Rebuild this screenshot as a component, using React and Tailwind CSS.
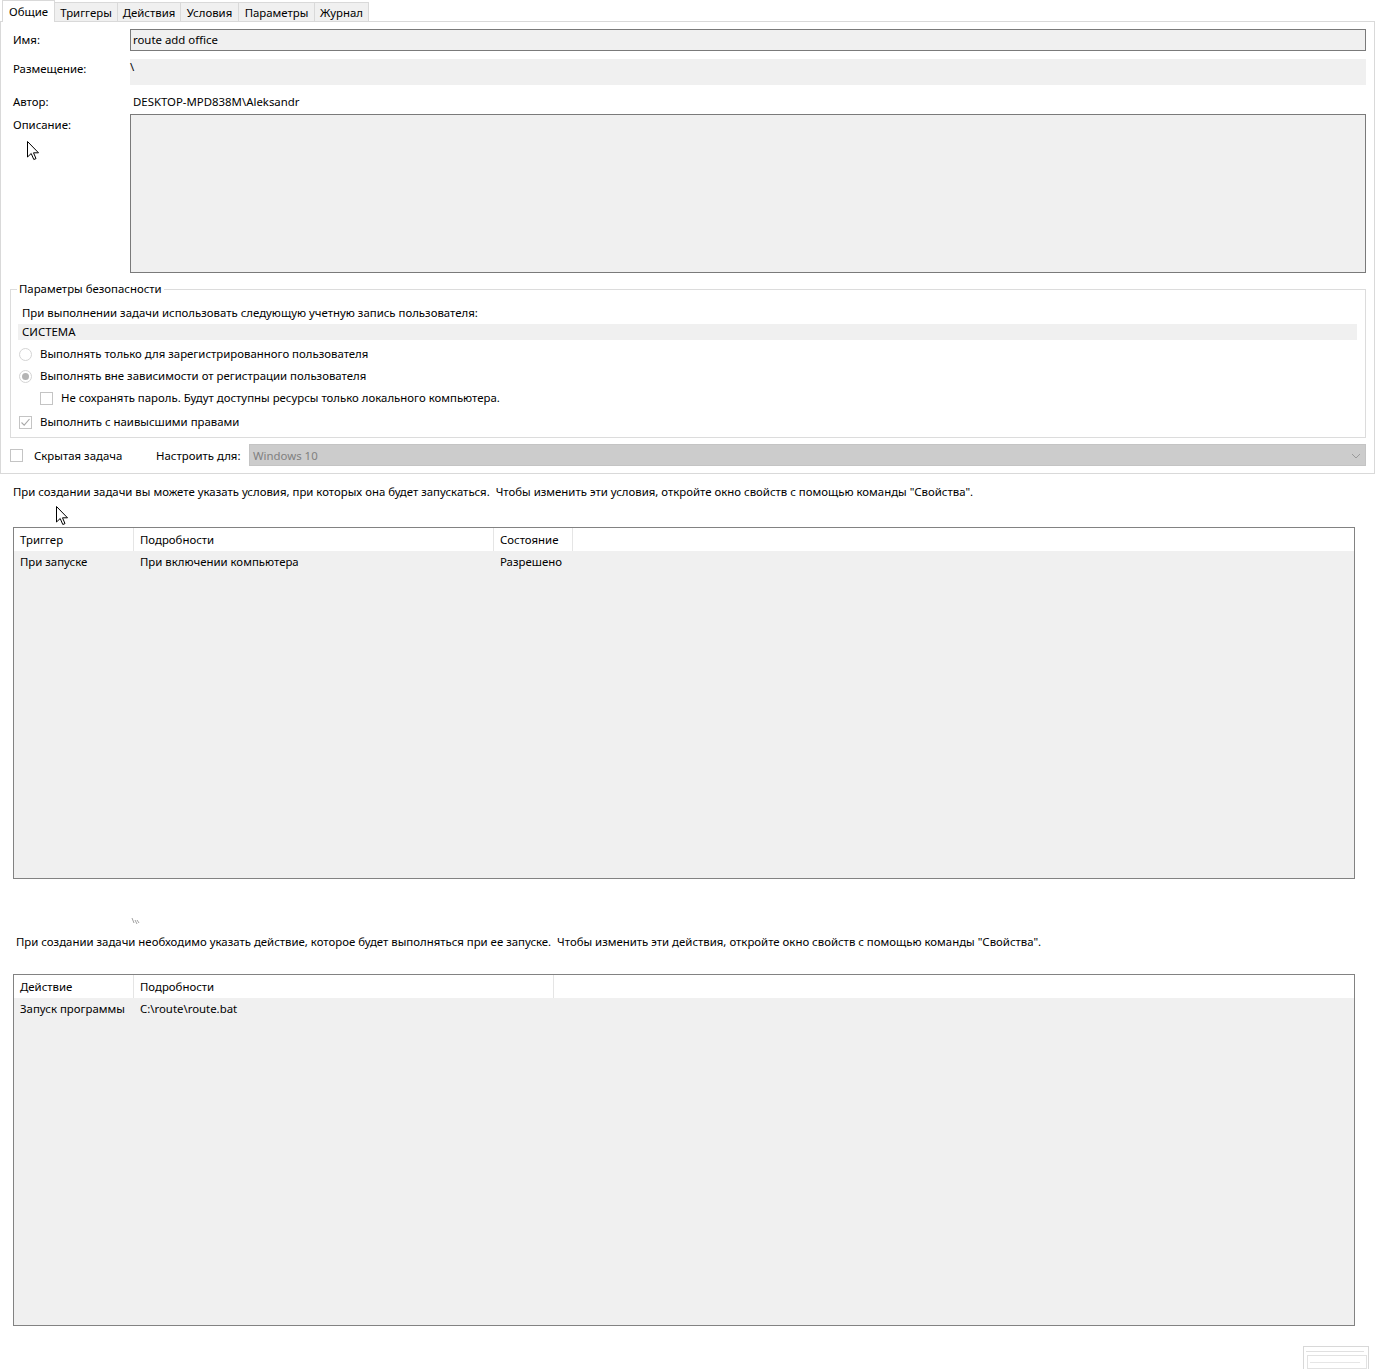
import React from 'react'

const Cursor = ({ className }) => (
    <svg className={className} width="13" height="20" viewBox="0 0 13 20">
        <path d="M0.5 0.5 L0.5 16 L4.2 12.5 L6.8 18.5 L9 17.6 L6.5 11.8 L11.5 11.8 Z" fill="#fff" stroke="#000" strokeWidth="1" strokeLinejoin="round" />
    </svg>
)

const Radio = ({ checked }) => (
    <span className="w-[13px] h-[13px] rounded-full border border-[#d4d4d4] bg-white flex items-center justify-center shrink-0">
        {checked && <span className="w-[7px] h-[7px] rounded-full bg-[#b4b4b4]" />}
    </span>
)

const Check = ({ checked }) => (
    <span className="w-[13px] h-[13px] border border-[#c4c4c4] bg-white flex items-center justify-center shrink-0">
        {checked && (
            <svg width="11" height="11" viewBox="0 0 11 11">
                <path d="M1.5 5.5 L4.2 8.2 L9.5 2" fill="none" stroke="#a8a8a8" strokeWidth="1.1" />
            </svg>
        )}
    </span>
)

const tabs = [
    { name: 'Общие', w: 'w-[53px]' },
    { name: 'Триггеры', w: 'w-[63px]' },
    { name: 'Действия', w: 'w-[63px]' },
    { name: 'Условия', w: 'w-[58px]' },
    { name: 'Параметры', w: 'w-[76px]' },
    { name: 'Журнал', w: 'w-[54px]' },
]

const ListTable = ({ columns, row }) => (
    <div className="ml-[13px] w-[1342px] h-[352px] border border-[#828282] bg-[#f0f0f0] flex flex-col">
        <div className="flex h-[23px] bg-white shrink-0">
            {columns.map((c) => (
                <div key={c.name} className={`${c.w} h-full border-r border-[#e5e5e5] pl-[6px] pt-[1px] flex items-center shrink-0`}>
                    {c.name}
                </div>
            ))}
        </div>
        <div className="flex h-[21px] items-center">
            {columns.map((c, i) => (
                <div key={c.name} className={`${c.w} h-full pl-[6px] pt-[1px] flex items-center shrink-0 border-r border-transparent`}>
                    {row[i]}
                </div>
            ))}
        </div>
    </div>
)

export default function App() {
    return (
        <div className="w-[1376px] h-[1369px] bg-white relative font-['Noto_Sans','Open_Sans',sans-serif] text-[11.4px] leading-[16px] text-black overflow-hidden">
            {/* tabs */}
            <div className="flex items-end h-[22px] pl-[2px] relative z-10">
                {tabs.map((t, i) =>
                    i === 0 ? (
                        <div key={t.name} className={`${t.w} h-[22px] bg-white border border-b-0 border-[#d9d9d9] flex items-center justify-center pt-[1px]`}>
                            {t.name}
                        </div>
                    ) : (
                        <div key={t.name} className={`${t.w} h-[20px] bg-[#f0f0f0] border border-l-0 border-[#d9d9d9] flex items-center justify-center pt-[2px]`}>
                            {t.name}
                        </div>
                    )
                )}
            </div>

            {/* general panel */}
            <div className="-mt-px w-[1375px] h-[453px] border border-[#d9d9d9] bg-white flex flex-col">
                <div className="flex items-center mt-[7px] h-[22px]">
                    <div className="w-[129px] pl-[12px]">Имя:</div>
                    <div className="w-[1236px] h-[22px] bg-[#f0f0f0] border border-[#7a7a7a] pl-[2px] flex items-center">route add office</div>
                </div>
                <div className="flex items-start mt-[8px] h-[26px]">
                    <div className="w-[129px] pl-[12px] pt-[2px]">Размещение:</div>
                    <div className="w-[1236px] h-[26px] bg-[#f0f0f0] leading-[16px]">\</div>
                </div>
                <div className="flex items-center mt-[9px] h-[16px]">
                    <div className="w-[129px] pl-[12px]">Автор:</div>
                    <div className="pl-[3px]">DESKTOP-MPD838M\Aleksandr</div>
                </div>
                <div className="flex items-start mt-[4px]">
                    <div className="w-[129px] pl-[12px] pt-[3px] flex flex-col">
                        <span>Описание:</span>
                        <Cursor className="ml-[14px] mt-[8px]" />
                    </div>
                    <div className="w-[1236px] h-[159px] bg-[#f0f0f0] border border-[#7a7a7a]" />
                </div>

                <fieldset className="mt-[8px] ml-[9px] w-[1356px] h-[157px] border border-[#dcdcdc] flex flex-col">
                    <legend className="ml-[6px] px-[2px] leading-[16px]">Параметры безопасности</legend>
                    <div className="mt-[8px] pl-[11px]">При выполнении задачи использовать следующую учетную запись пользователя:</div>
                    <div className="mt-[3px] ml-[7px] w-[1339px] h-[16px] bg-[#f0f0f0] pl-[4px]">СИСТЕМА</div>
                    <div className="mt-[6px] ml-[8px] flex items-center gap-[8px] h-[16px]">
                        <Radio />
                        <span>Выполнять только для зарегистрированного пользователя</span>
                    </div>
                    <div className="mt-[6px] ml-[8px] flex items-center gap-[8px] h-[16px]">
                        <Radio checked />
                        <span>Выполнять вне зависимости от регистрации пользователя</span>
                    </div>
                    <div className="mt-[6px] ml-[29px] flex items-center gap-[8px] h-[16px]">
                        <Check />
                        <span>Не сохранять пароль. Будут доступны ресурсы только локального компьютера.</span>
                    </div>
                    <div className="mt-[8px] ml-[8px] flex items-center gap-[8px] h-[16px]">
                        <Check checked />
                        <span>Выполнить с наивысшими правами</span>
                    </div>
                </fieldset>

                <div className="mt-[6px] h-[22px] flex items-center">
                    <div className="ml-[9px]"><Check /></div>
                    <div className="ml-[11px] w-[122px] pt-[1px]">Скрытая задача</div>
                    <div className="w-[93px] pt-[1px]">Настроить для:</div>
                    <div className="w-[1117px] h-[22px] bg-[#cccccc] border border-[#c4c4c4] flex items-center justify-between pl-[3px] pr-[4px] pt-[1px] text-[#808080]">
                        <span>Windows 10</span>
                        <svg width="10" height="6" viewBox="0 0 10 6">
                            <path d="M1 1 L5 5 L9 1" fill="none" stroke="#9a9a9a" strokeWidth="1" />
                        </svg>
                    </div>
                </div>
            </div>

            {/* triggers */}
            <div className="mt-[10px] pl-[13px] h-[16px]">
                При создании задачи вы можете указать условия, при которых она будет запускаться.&nbsp; Чтобы изменить эти условия, откройте окно свойств с помощью команды "Свойства".
            </div>
            <div className="h-[27px] pl-[56px] pt-[6px]">
                <Cursor />
            </div>
            <ListTable
                columns={[
                    { name: 'Триггер', w: 'w-[120px]' },
                    { name: 'Подробности', w: 'w-[360px]' },
                    { name: 'Состояние', w: 'w-[79px]' },
                ]}
                row={['При запуске', 'При включении компьютера', 'Разрешено']}
            />

            {/* actions */}
            <div className="h-[55px] pl-[131px] pt-[38px]">
                <svg width="10" height="8" viewBox="0 0 10 8">
                    <path d="M1 1 L3 6 M4 3 L6 7 M6 3 L8 6" fill="none" stroke="#888" strokeWidth="0.8" />
                </svg>
            </div>
            <div className="pl-[16px] h-[16px]">
                При создании задачи необходимо указать действие, которое будет выполняться при ее запуске.&nbsp; Чтобы изменить эти действия, откройте окно свойств с помощью команды "Свойства".
            </div>
            <div className="h-[24px]" />
            <ListTable
                columns={[
                    { name: 'Действие', w: 'w-[120px]' },
                    { name: 'Подробности', w: 'w-[420px]' },
                ]}
                row={['Запуск программы', 'C:\\route\\route.bat']}
            />

            {/* thumbnail in corner */}
            <div className="absolute left-[1303px] top-[1346px] w-[66px] h-[24px] border border-[#d8d8d8] bg-white flex flex-col gap-[3px] pt-[4px] pl-[2px]">
                <div className="w-[58px] h-px bg-[#e0e0e0]" />
                <div className="w-[60px] h-[14px] border border-[#e2e2e2] ml-[1px] flex flex-col pt-[6px] gap-[2px] pl-[2px]">
                    <div className="w-[50px] h-px bg-[#e6e6e6]" />
                </div>
            </div>
        </div>
    )
}
